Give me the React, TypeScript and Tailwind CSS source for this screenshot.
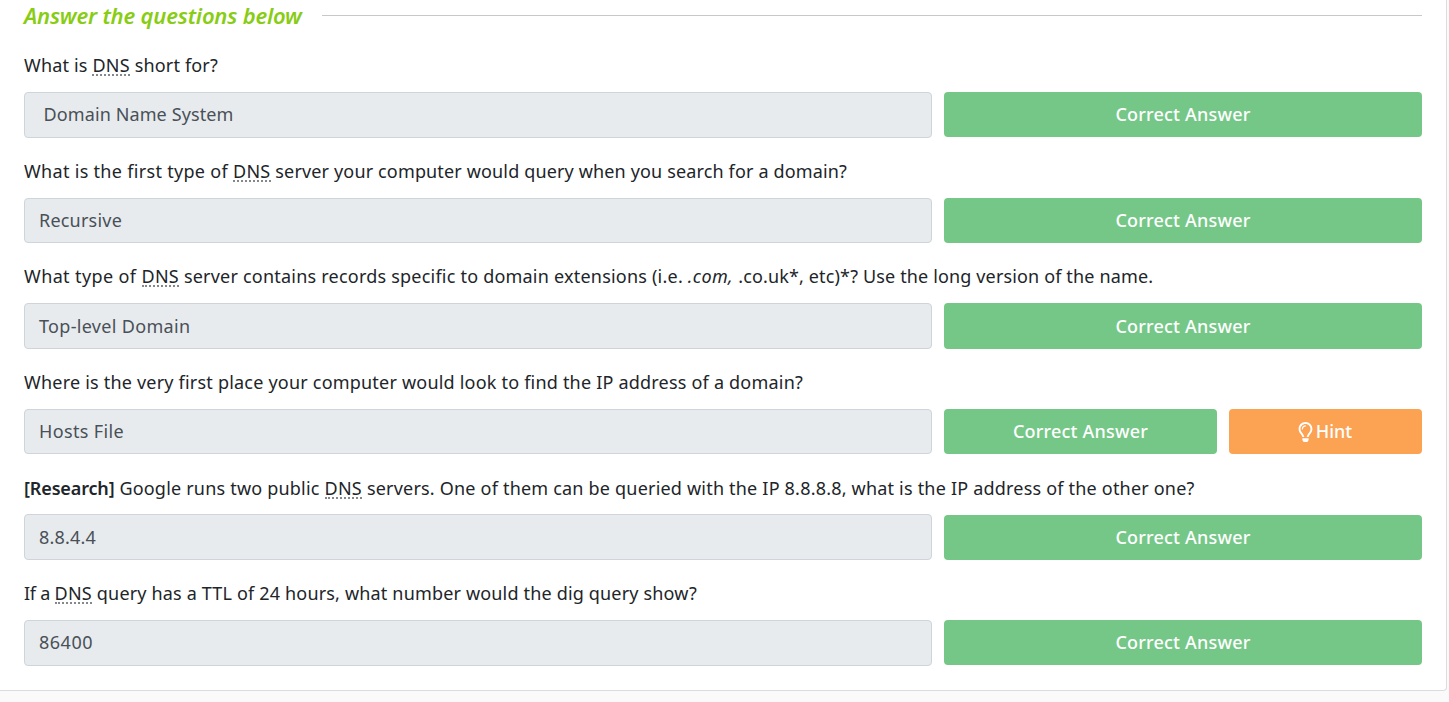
import type { ReactNode } from 'react';
import { FaRegLightbulb } from 'react-icons/fa';

function Dns() {
  return (
    <span className="inline-block h-[23px] border-b-2 border-dotted border-[#85888b] leading-[25px] tracking-[0.266px] align-top">
      DNS
    </span>
  );
}

type Item = { question: ReactNode; answer: string; answerClass: string; hint?: boolean };

const items: Item[] = [
  {
    question: (
      <>
        <span className="tracking-[0.16px]">What is </span>
        <Dns />
        <span className="tracking-[0.158px]"> short for?</span>
      </>
    ),
    answer: 'Domain Name System',
    answerClass: 'pl-[18.5px] tracking-[0.11px]',
  },
  {
    question: (
      <>
        <span className="tracking-[0.31px]">What is the first type of </span>
        <Dns />
        <span className="tracking-[0.15px]"> server your computer would query when you search for a domain?</span>
      </>
    ),
    answer: 'Recursive',
    answerClass: 'pl-3.5 tracking-[0.21px]',
  },
  {
    question: (
      <>
        <span className="tracking-[0.386px]">What type of </span>
        <Dns />
        <span className="tracking-[0.215px]"> server contains records specific to domain extensions (i.e. </span>
        <em className="tracking-[0.4px]">.com, </em>
        <span className="tracking-[0.146px]">.co.uk*, etc)*? Use the long version of the name.</span>
      </>
    ),
    answer: 'Top-level Domain',
    answerClass: 'pl-3.5 tracking-[0.32px]',
  },
  {
    question: (
      <span className="tracking-[0.206px]">
        Where is the very first place your computer would look to find the IP address of a domain?
      </span>
    ),
    answer: 'Hosts File',
    answerClass: 'pl-3.5 tracking-[0.356px]',
    hint: true,
  },
  {
    question: (
      <>
        <strong className="font-semibold tracking-[-0.139px]">[Research]</strong>
        <span className="tracking-[0.201px]"> Google runs two public </span>
        <Dns />
        <span className="tracking-[0.2px]">
          {' '}servers. One of them can be queried with the IP 8.8.8.8, what is the IP address of the other one?
        </span>
      </>
    ),
    answer: '8.8.4.4',
    answerClass: 'pl-3.5 tracking-[0.192px]',
  },
  {
    question: (
      <>
        <span className="tracking-[-0.253px]">If a </span>
        <Dns />
        <span className="tracking-[0.17px]"> query has a TTL of 24 hours, what number would the dig query show?</span>
      </>
    ),
    answer: '86400',
    answerClass: 'pl-3.5 tracking-[0.503px]',
  },
];

function Question({ question, answer, answerClass, hint }: Item) {
  return (
    <div className="h-[105.58px]">
      <p className="h-[39.5px] pt-[0.65px] whitespace-pre leading-[25px] text-[#212529]">{question}</p>
      <div className="flex gap-3">
        <div
          className={`flex h-[45.6px] w-[908px] items-center rounded-[4px] border border-[#ced4da] bg-[#e7ebee] text-[#495057] ${answerClass}`}
        >
          {answer}
        </div>
        <button className="mt-[0.25px] h-[45.1px] flex-1 rounded-[4px] bg-[#75c787] font-medium tracking-[0.19px] text-white">
          Correct Answer
        </button>
        {hint && (
          <button className="mt-[0.25px] flex h-[45.1px] w-[193px] items-center justify-center gap-[3px] rounded-[4px] bg-[#fca253] pr-px font-medium text-white">
            <FaRegLightbulb className="h-5 w-[15px]" />
            Hint
          </button>
        )}
      </div>
    </div>
  );
}

export default function App() {
  return (
    <div className="h-[702px] overflow-hidden bg-[#fafafa] font-['Noto_Sans',sans-serif] text-[18px]">
      <main className="h-[691px] w-[1447px] rounded-br-[4px] border-r border-b border-[#dcdcdc] bg-white pr-6 pl-6">
        <div className="flex h-[52.55px] gap-[19px]">
          <h2 className="w-[279px] shrink-0 whitespace-nowrap text-[22px] leading-[30px] font-semibold tracking-[-0.2px] text-[#88cc14] italic">
            Answer the questions below
          </h2>
          <div className="mt-[15px] h-px flex-1 bg-[#c8c8c8]" />
        </div>
        {items.map((item) => (
          <Question key={item.answer} {...item} />
        ))}
      </main>
    </div>
  );
}
